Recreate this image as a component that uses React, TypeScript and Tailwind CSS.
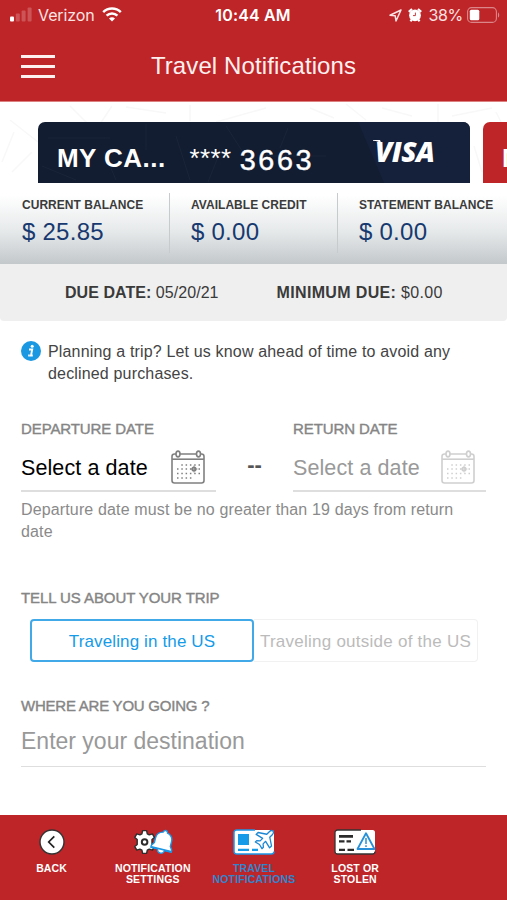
import { ReactNode } from "react";
import clsx from "clsx";

const Wifi = () => (
  <svg width="20" height="15" viewBox="0 0 20 15" fill="none" stroke="#fff" strokeWidth="2.5">
    <path d="M1.2 5.2C6 .4 14 .4 18.8 5.2" />
    <path d="M4.6 8.7c3-3 7.8-3 10.8 0" />
    <path d="M10 14.4 7 11.4c1.8-1.6 4.2-1.6 6 0z" fill="#fff" stroke="none" />
  </svg>
);

const Signal = () => (
  <svg width="24" height="15" viewBox="0 0 24 15" fill="#fff">
    <rect x="1" y="9.5" width="4" height="5" rx="1" />
    <rect x="6.8" y="6.5" width="4" height="8" rx="1" opacity=".22" />
    <rect x="12.6" y="3.5" width="4" height="11" rx="1" opacity=".22" />
    <rect x="18.6" y=".5" width="4" height="14" rx="1" opacity=".22" />
  </svg>
);

const LocationArrow = () => (
  <svg width="13" height="13" viewBox="0 0 13 13" fill="none" stroke="#fbe3e3" strokeWidth="1.5" strokeLinejoin="round">
    <path d="M12 1 1 6.2l5.2.6L7 12z" />
  </svg>
);

const Alarm = () => (
  <svg width="14" height="14" viewBox="0 0 14 14">
    <circle cx="7" cy="7.3" r="5.9" fill="#fff" />
    <path d="M.8 3.8 4 1M13.2 3.8 10 1M2.4 13.2l1.4-1.6M11.6 13.2l-1.4-1.6" stroke="#fff" strokeWidth="2.2" />
    <path d="M7.4 4.6v3H5" fill="none" stroke="#be2528" strokeWidth=".9" />
  </svg>
);

const Battery = () => (
  <svg width="33" height="16" viewBox="0 0 33 16">
    <rect x=".6" y=".6" width="28.8" height="14.8" rx="4" fill="none" stroke="#fff" strokeOpacity=".45" strokeWidth="1.1" />
    <rect x="2.8" y="2.8" width="9.5" height="10.4" rx="1.5" fill="#fff" />
    <path d="M31 5.4c1.6.6 1.6 4.6 0 5.2z" fill="#fff" fillOpacity=".45" />
  </svg>
);

const Calendar = ({ color }: { color: string }) => (
  <svg width="34" height="34" viewBox="0 0 34 34" fill="none" stroke={color} strokeWidth="1.6">
    <rect x="1" y="4" width="32" height="29" rx="2.5" />
    <path d="M1 9.2h32" />
    <ellipse cx="7" cy="4" rx="2" ry="2.9" fill="#fff" />
    <ellipse cx="27.5" cy="4" rx="2" ry="2.9" fill="#fff" />
    <path d="M10.3 15h19M6 19h23M6 23.5h23M6 28h15" strokeDasharray="1.5 2.8" strokeWidth="1.3" />
    <circle cx="23" cy="19" r="1.8" />
    <path d="M23 15.5v7M19.5 19h7" strokeWidth=".8" />
  </svg>
);

const BackIcon = () => (
  <svg width="26" height="26" viewBox="0 0 26 26">
    <circle cx="13" cy="13" r="12" fill="#fff" stroke="#333" strokeWidth="1.4" />
    <path d="m15.3 7.3-5.6 5.7 5.6 5.7" fill="none" stroke="#222" strokeWidth="1.7" />
  </svg>
);

const SettingsIcon = () => (
  <svg width="40" height="26" viewBox="0 0 40 26">
    <path
      d="M9.6 1.6h4l.7 3.2 2 1.1 3.1-1 2 3.5-2.4 2.2v4.8l2.4 2.2-2 3.5-3.1-1-2 1.1-.7 3.2h-4l-.7-3.2-2-1.1-3.1 1-2-3.5 2.4-2.2v-4.8L1.8 8.4l2-3.5 3.1 1 2-1.1z"
      fill="#fff" stroke="#2d2d2d" strokeWidth="1.4" strokeLinejoin="round"
    />
    <circle cx="11.6" cy="13" r="2.8" fill="#fff" stroke="#2d2d2d" strokeWidth="2" />
    <g transform="rotate(14 30 13)">
      <path
        d="M30 1.2a2.200 2.200 0 0 0-2.200 2.200c-4 .9-6 3.700-6 7.200v5L19.500 19v2h7a3.500 3.500 0 0 0 7 0h7v-2l-2.300-3.400v-5c0-3.500-2-6.300-6-7.200A2.200 2.200 0 0 0 30 1.200z"
        fill="#fff" stroke="#1b97e6" strokeWidth="1.4" strokeLinejoin="round"
      />
      <path d="M20 20.400h20" stroke="#1b97e6" strokeWidth="1.6" />
    </g>
  </svg>
);

const TravelIcon = () => (
  <svg width="42" height="26" viewBox="0 0 42 26">
    <rect x="1" y="1" width="40" height="24" rx="2.5" fill="#fff" />
    <path d="M22 1H3.5A2.5 2.5 0 0 0 1 3.5v19A2.5 2.5 0 0 0 3.5 25h35a2.5 2.5 0 0 0 2.5-2.5" fill="none" stroke="#1b97e6" strokeWidth="1.5" />
    <path d="M5 5h11v11H5zM5 19.7h11V22H5zM19 19.7h6V22h-6z" fill="#159be8" />
    <g transform="translate(32.5 9.5) rotate(45)">
      <path
        d="M0-10.5c1.4 0 2.1 1.5 2.1 3v3.600L9.500 1v2.700L2.100 1.900v3.600l2.600 2.200v2L0 8.500l-4.700 1.200v-2l2.600-2.200V1.900l-7.400 1.800V1l7.400-4.900v-3.600c0-1.500.7-3 2.100-3z"
        fill="#fff" stroke="#1b87d3" strokeWidth="1.3" strokeLinejoin="round"
      />
    </g>
  </svg>
);

const LostIcon = () => (
  <svg width="42" height="26" viewBox="0 0 42 26">
    <rect x="1" y="1" width="40" height="24" rx="2.5" fill="#fff" />
    <path d="M27 1H3.5A2.5 2.5 0 0 0 1 3.5v19A2.5 2.5 0 0 0 3.5 25h35a2.5 2.5 0 0 0 2.5-2.5" fill="none" stroke="#333" strokeWidth="1.3" />
    <path d="M5 6h14v2.8H5zM5 11.2h5.5v2.200H5zM12.5 11.2H17v2.200h-4.500zM5 19.700h6V22H5zM13.500 19.700H20V22h-6.500z" fill="#2b2b2b" />
    <path d="M32 4.2 40.500 20h-17z" fill="#fff" stroke="#2790d8" strokeWidth="1.8" strokeLinejoin="round" />
    <path d="M32 9v6M32 16.300v1.700" stroke="#2790d8" strokeWidth="1.5" />
  </svg>
);

function Amount({ label, value }: { label: string; value: string }) {
  return (
    <div className="pt-[14px] pl-[22px] whitespace-nowrap">
      <div className="text-[12px] leading-[17px] font-bold tracking-[0.04px] text-[#3b3b3b]">{label}</div>
      <div className="mt-[2px] text-[24px] leading-8 tracking-[0.25px] text-[#17396f]">{value}</div>
    </div>
  );
}

function Label({ children, className }: { children: ReactNode; className?: string }) {
  return (
    <div className={clsx("-mb-px pt-px text-[15px] leading-5 text-[#858585] [-webkit-text-stroke:0.4px_#858585]", className)}>
      {children}
    </div>
  );
}

function DateField({ label, disabled }: { label: string; disabled?: boolean }) {
  return (
    <div>
      <Label className="tracking-[-0.1px]">{label}</Label>
      <div className="mt-1 flex h-[50px] items-center justify-between border-b-2 border-[#dedede] pt-[3px] pr-[11px]">
        <span className={clsx("text-[21.5px] leading-7 tracking-[0.1px]", disabled ? "text-[#999]" : "text-black")}>Select a date</span>
        <span className="-mt-px"><Calendar color={disabled ? "#cfcfcf" : "#808080"} /></span>
      </div>
    </div>
  );
}

function NavItem({ icon, lines, active }: { icon: ReactNode; lines: string[]; active?: boolean }) {
  return (
    <button className="flex flex-col items-center pt-[14px]">
      {icon}
      <span
        className={clsx(
          "mt-[8px] text-[10.5px] leading-[11px] font-bold tracking-[0.15px] whitespace-nowrap",
          active ? "text-[#2f86cf]" : "text-white"
        )}
      >
        {lines.map((line) => (
          <span key={line} className="block">{line}</span>
        ))}
      </span>
    </button>
  );
}

export default function App() {
  return (
    <div className="flex h-[900px] w-[507px] flex-col overflow-hidden bg-white font-['Liberation_Sans',Arial,sans-serif]">
      <header className="h-[102px] shrink-0 border-b border-[#dc8080] bg-[#be2528] text-white">
        <div className="grid h-[30px] grid-cols-3 items-center pr-[7px] pl-[9px] font-['Inter',sans-serif] text-[16px] leading-[30px]">
          <div className="flex items-center">
            <span className="-mt-[2px]"><Signal /></span>
            <span className="ml-[5px] tracking-[-0.1px] text-[#fbe3e3]">Verizon</span>
            <span className="-mt-px ml-[7px]"><Wifi /></span>
          </div>
          <div className="pr-[3px] text-center font-semibold tracking-[0.15px]">10:44 AM</div>
          <div className="flex items-center justify-end">
            <LocationArrow />
            <span className="-mt-px ml-[6px]"><Alarm /></span>
            <span className="ml-[6px] tracking-[-0.3px] text-[#fbe3e3]">38%</span>
            <span className="-mt-px ml-[4px]"><Battery /></span>
          </div>
        </div>
        <div className="relative flex h-[71px] items-center justify-center">
          <button className="absolute top-[25px] left-[21px] flex w-[34px] flex-col gap-[7px]">
            <span className="h-[3px] bg-[#fff0f0]" />
            <span className="h-[3px] bg-[#fff0f0]" />
            <span className="h-[3px] bg-[#fff0f0]" />
          </button>
          <h1 className="text-[24px] leading-8 tracking-[0.1px] text-[#fff0f0]">Travel Notifications</h1>
        </div>
      </header>

      <section className="relative h-[81px] shrink-0 overflow-hidden">
        <svg className="absolute inset-0" width="507" height="81" fill="none" stroke="#f8f8f9" strokeWidth="1.5">
          <path d="M10 18l28 22M2 60l12-30M70 4l20 20M112 4l-12 18M126 5l40 6M190 3v16M216 20l50-14M310 6l24 10M346 2l20 16M382 6l30 8M438 2v18M452 14l40-8M496 10l8 16M12 70l20-20M474 44l8 26" />
        </svg>
        <div className="relative flex gap-[13px] pt-[20px] pl-[38px]">
          <div className="relative flex h-[61px] w-[432px] shrink-0 overflow-hidden rounded-t-[7px] bg-[#131d31] text-white">
            <svg className="absolute inset-0" width="432" height="61" fill="none" stroke="#1a2539">
              <path d="M320 0h112v61h-86z" fill="#15213a" stroke="none" />
              <path d="M10 16h62M4 44l34 14M108 2v26M138 14l14 44M182 30l-12 30M188 4l22 34M228 34h60M250 6l-8 20M66 30l12 28" />
            </svg>
            <span className="relative mt-[20px] ml-[19px] w-[132.5px] text-[26px] leading-8 font-bold tracking-[0.45px]">MY CA...</span>
            <span className="relative mt-[20px] w-[49.5px] text-[26px] leading-8 tracking-[0.4px]">****</span>
            <span className="relative mt-[25px] w-[136px] font-['Liberation_Mono',monospace] text-[29px] leading-8 tracking-[1.2px] [-webkit-text-stroke:0.4px_white]">3663</span>
            <span className="relative mt-[13px] font-['Open_Sans',sans-serif] text-[28px] leading-8 font-extrabold tracking-[-0.5px] italic">
              VISA
              <svg className="absolute top-[5px] left-[-2px]" width="10" height="6" fill="#fff">
                <path d="M0 0h7l2 5C7 2 4 1 0 .8z" />
              </svg>
            </span>
          </div>
          <div className="h-[61px] w-[432px] shrink-0 rounded-t-[7px] bg-[#be2528] pt-[20px] pl-[19px] text-[26px] leading-8 font-bold text-white">MY CA...</div>
        </div>
      </section>

      <section className="grid h-[81px] shrink-0 grid-cols-[169px_168px_170px] bg-linear-to-b from-white from-15% via-[#e6e9ea] via-60% to-[#c3c8cb]">
        <Amount label="CURRENT BALANCE" value="$ 25.85" />
        <div className="relative">
          <span className="absolute top-[10px] left-0 h-[60px] w-px bg-[#c8cbcd]" />
          <Amount label="AVAILABLE CREDIT" value="$ 0.00" />
        </div>
        <div className="relative">
          <span className="absolute top-[10px] left-0 h-[60px] w-px bg-[#c8cbcd]" />
          <Amount label="STATEMENT BALANCE" value="$ 0.00" />
        </div>
      </section>

      <section className="flex h-[57px] shrink-0 items-center rounded-b-[4px] bg-[#efefef] pl-[65px] text-[16px] text-[#3a3a3a]">
        <div className="w-[211.5px] tracking-[0.05px]"><b>DUE DATE:</b> 05/20/21</div>
        <div className="tracking-[0.35px]"><b>MINIMUM DUE:</b> $0.00</div>
      </section>

      <main className="flex-1 px-[21px] pt-[20px]">
        <div className="flex">
          <svg className="mr-[7px] shrink-0" width="20" height="20" viewBox="0 0 20 20">
            <circle cx="10" cy="10" r="10" fill="#1a98e2" />
            <path d="M8 8.5h3.2l-1.2 6h1.8M7.2 14.5h1.6" fill="none" stroke="#fff" strokeWidth="1.9" />
            <circle cx="11.2" cy="5.2" r="1.5" fill="#fff" />
          </svg>
          <p className="text-[16px] leading-[21.5px] tracking-[0.165px] whitespace-nowrap text-[#444]">
            Planning a trip? Let us know ahead of time to avoid any<br />declined purchases.
          </p>
        </div>

        <div className="mt-[34px] grid grid-cols-[195px_77px_193px]">
          <DateField label="DEPARTURE DATE" />
          <div className="pt-[33px] text-center text-[22px] leading-7 font-bold text-[#555]">--</div>
          <DateField label="RETURN DATE" disabled />
        </div>
        <p className="mt-[7px] text-[16px] leading-[21.5px] tracking-[0.14px] text-[#8a8a8a]">
          Departure date must be no greater than 19 days from return<br />date
        </p>

        <div className="mt-[45px]"><Label className="tracking-[-0.08px]">TELL US ABOUT YOUR TRIP</Label></div>
        <div className="mt-[12px] ml-[9px] flex h-[43px] w-[448px] text-[17px] whitespace-nowrap">
          <button className="w-[224px] rounded-[4px] border-2 border-[#42a9e8] pt-[2px] tracking-[0.13px] text-[#159be8]">Traveling in the US</button>
          <button className="w-[224px] rounded-r-[4px] border border-l-0 border-[#f1f1f1] pt-[2px] tracking-[0.25px] text-[#bbb]">Traveling outside of the US</button>
        </div>

        <div className="mt-[33px]"><Label className="tracking-[-0.23px]">WHERE ARE YOU GOING ?</Label></div>
        <div className="mt-[2px] h-[50px] border-b border-[#dedede] text-[23px] leading-[48px] text-[#999]">Enter your destination</div>
      </main>

      <nav className="grid h-[85px] shrink-0 grid-cols-5 bg-[#be2528] pl-px">
        <NavItem icon={<BackIcon />} lines={["BACK"]} />
        <NavItem icon={<SettingsIcon />} lines={["NOTIFICATION", "SETTINGS"]} />
        <NavItem icon={<TravelIcon />} lines={["TRAVEL", "NOTIFICATIONS"]} active />
        <NavItem icon={<LostIcon />} lines={["LOST OR", "STOLEN"]} />
      </nav>
    </div>
  );
}
